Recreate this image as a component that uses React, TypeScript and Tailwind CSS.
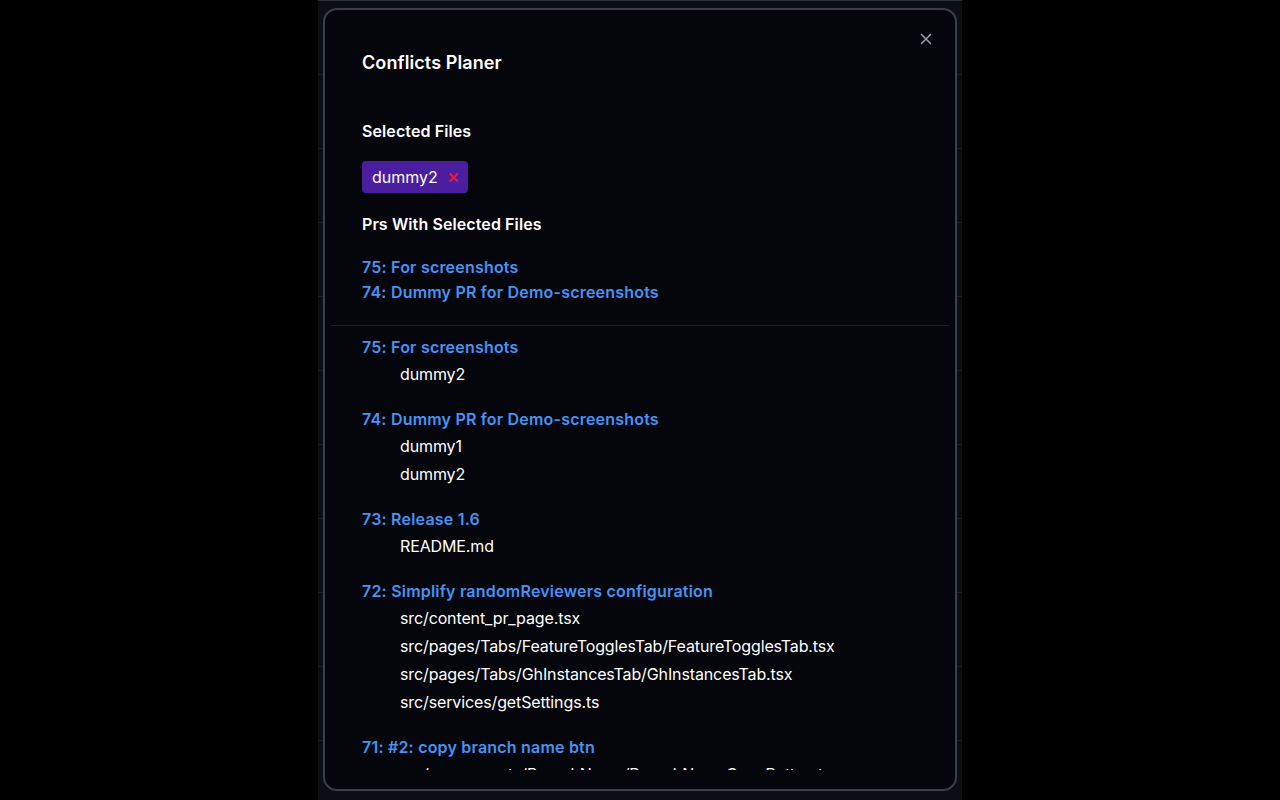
import { X } from "lucide-react";

interface Pr {
  id: number;
  title: string;
  files: string[];
}

const PRS_WITH_SELECTED: Pr[] = [
  { id: 75, title: "For screenshots", files: ["dummy2"] },
  { id: 74, title: "Dummy PR for Demo-screenshots", files: ["dummy1", "dummy2"] },
];

const ALL_PRS: Pr[] = [
  ...PRS_WITH_SELECTED,
  { id: 73, title: "Release 1.6", files: ["README.md"] },
  {
    id: 72,
    title: "Simplify randomReviewers configuration",
    files: [
      "src/content_pr_page.tsx",
      "src/pages/Tabs/FeatureTogglesTab/FeatureTogglesTab.tsx",
      "src/pages/Tabs/GhInstancesTab/GhInstancesTab.tsx",
      "src/services/getSettings.ts",
    ],
  },
  {
    id: 71,
    title: "#2: copy branch name btn",
    files: ["src/components/BranchName/BranchNameCopyButton.tsx", "src/content_pr_page.tsx"],
  },
];

// fond : la page GitHub derrière l'overlay
function PageDerriere() {
  const lignes = Array.from({ length: 11 });
  return (
    <div className="ml-[318px] flex h-[800px] w-[644px] flex-col bg-[#0b0e13]">
      <div className="h-[16px] border-b border-[#2a2f37] bg-[#151a21]" />
      {lignes.map((_, i) => (
        <div key={i} className="h-[74px] shrink-0 border-b border-[#1c2128]" />
      ))}
    </div>
  );
}

export default function App() {
  return (
    <div
      className="relative h-[800px] w-[1280px] overflow-hidden bg-black"
      style={{ fontFamily: "Inter, 'Noto Sans', sans-serif" }}
    >
      <PageDerriere />

      <div className="absolute left-[323px] top-[8px] h-[783px] w-[634px] rounded-[14px] border-2 border-[#3a4048] bg-[#04060b] pb-[19px]">
        <button className="absolute right-[20px] top-[20px] text-[#9aa1ab]">
          <X size={18} strokeWidth={2} />
        </button>

        <div className="flex h-full flex-col overflow-hidden">
          <div className="px-[37px] pt-[41px]">
            <h2 className="text-[18px] font-semibold leading-[24px] tracking-[0.1px] text-white">
              Conflicts Planer
            </h2>

            <h3 className="mt-[44px] text-[16px] font-semibold leading-[24px] tracking-[0.1px] text-white">
              Selected Files
            </h3>
            <div className="mt-[18px] flex">
              <span className="flex h-[32px] items-center gap-[9px] rounded-[4px] bg-[#4a1e9e] pl-[10px] pr-[8px] text-[16px] text-white">
                dummy2
                <span className="text-[15px] font-bold leading-none text-[#e5163a]">✕</span>
              </span>
            </div>

            <h3 className="mt-[19px] text-[16px] font-semibold leading-[24px] tracking-[0.1px] text-white">
              Prs With Selected Files
            </h3>
            <ul className="mt-[19px]">
              {PRS_WITH_SELECTED.map((pr) => (
                <li
                  key={pr.id}
                  className="text-[16px] font-semibold leading-[25px] tracking-[0.2px] text-[#4693f5]"
                >
                  {pr.id}: {pr.title}
                </li>
              ))}
            </ul>
          </div>

          <div className="mx-[6px] mt-[20px] shrink-0 border-t border-[#11272a]" />

          <ul className="flex flex-col gap-[19px] px-[37px] pt-[9px]">
            {ALL_PRS.map((pr) => (
              <li key={pr.id}>
                <p className="text-[16px] font-semibold leading-[25px] tracking-[0.2px] text-[#4693f5]">
                  {pr.id}: {pr.title}
                </p>
                <ul className="pl-[38px]">
                  {pr.files.map((f) => (
                    <li key={f} className="text-[16px] leading-[28px] tracking-[-0.12px] text-white">
                      {f}
                    </li>
                  ))}
                </ul>
              </li>
            ))}
          </ul>
        </div>
      </div>
    </div>
  );
}
